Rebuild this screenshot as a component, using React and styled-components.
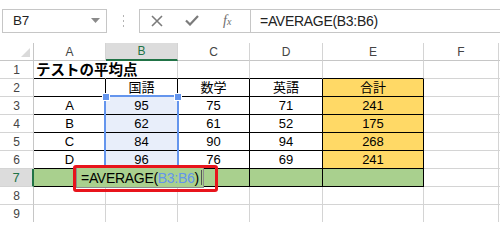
import React from "react";
import styled, { createGlobalStyle, css } from "styled-components";

const FONT = `"Liberation Sans", "Noto Sans CJK JP", sans-serif`;

const colors = {
  grid: "#d4d4d4",
  header: "#c6c6c6",
  headerSel: "#dcdcdc",
  green: "#217346",
  yellow: "#ffd966",
  total: "#a9d08e",
  select: "#e8eefa",
  range: "#6495ed",
  callout: "#e8141c",
};

// column widths include the 1px right grid line
const columns = [
  { label: "", width: 34 },
  { label: "A", width: 72 },
  { label: "B", width: 72, selected: true },
  { label: "C", width: 72 },
  { label: "D", width: 73 },
  { label: "E", width: 101 },
  { label: "F", width: 75 },
  { label: "", width: 30 },
];

const table = [
  [{ text: "テストの平均点", bold: true, align: "left", spill: true }],
  [{}, { text: "国語" }, { text: "数学" }, { text: "英語" }, { text: "合計" }],
  [{ text: "A" }, { text: "95" }, { text: "75" }, { text: "71" }, { text: "241" }],
  [{ text: "B" }, { text: "62" }, { text: "61" }, { text: "52" }, { text: "175" }],
  [{ text: "C" }, { text: "84" }, { text: "90" }, { text: "94" }, { text: "268" }],
  [{ text: "D" }, { text: "96" }, { text: "76" }, { text: "69" }, { text: "241" }],
  [],
  [],
  [],
];

const cellStyle = (row, col) => {
  // col: 0 = A ... 6 = G, row: 1..9
  const inTable = col <= 4;
  let bg = "#fff";
  if (col === 4 && row >= 2 && row <= 6) bg = colors.yellow;
  if (row === 7 && inTable) bg = colors.total;
  if (col === 1 && row >= 3 && row <= 6) bg = colors.select;
  let right = colors.grid;
  let bottom = colors.grid;
  if (inTable && row >= 1 && row <= 7) bottom = "#000";
  if (inTable && row >= 2 && row <= 7) right = "#000";
  if (row === 1 && col === 0) right = "#fff";
  return { bg, right, bottom };
};

export default function App() {
  return (
    <>
      <GlobalStyle />
      <Frame>
        <Toolbar>
          <NameBox>
            <NameText>B7</NameText>
            <svg width="9" height="5" viewBox="0 0 9 5">
              <path d="M0 0h9L4.5 5z" fill="#8a8a8a" />
            </svg>
          </NameBox>
          <Grip>
            <svg width="3" height="13" viewBox="0 0 3 13">
              <rect x="1" y="0" width="1" height="2" fill="#b4b4b4" />
              <rect x="1" y="5" width="1" height="2" fill="#b4b4b4" />
              <rect x="1" y="10" width="1" height="2" fill="#b4b4b4" />
            </svg>
          </Grip>
          <FxGroup>
            <ToolIcon>
              <svg width="12" height="12" viewBox="0 0 12 12">
                <path d="M1 1l10 10M11 1L1 11" stroke="#7b7b7b" strokeWidth="1.6" />
              </svg>
            </ToolIcon>
            <ToolIcon $gap={22}>
              <svg width="14" height="11" viewBox="0 0 14 11">
                <path d="M1 5.5l4 4L13 1" stroke="#7b7b7b" strokeWidth="2.2" fill="none" />
              </svg>
            </ToolIcon>
            <FxLabel>
              f<sub>x</sub>
            </FxLabel>
          </FxGroup>
          <FormulaInput>=AVERAGE(B3:B6)</FormulaInput>
        </Toolbar>

        <Sheet>
          <Corner>
            <svg width="9" height="9" viewBox="0 0 9 9">
              <path d="M9 0v9H0z" fill="#dadada" />
            </svg>
          </Corner>
          {columns.slice(1).map((c, i) => (
            <ColHeader key={i} $selected={c.selected}>
              {c.label}
            </ColHeader>
          ))}
          {table.map((cells, r) => {
            const row = r + 1;
            return (
              <React.Fragment key={row}>
                <RowHeader $selected={row === 7}>{row}</RowHeader>
                {columns.slice(1).map((_, col) => {
                  const data = cells[col] || {};
                  const s = cellStyle(row, col);
                  return (
                    <Cell
                      key={col}
                      $bg={s.bg}
                      $right={s.right}
                      $bottom={s.bottom}
                      $align={data.align}
                      $bold={data.bold}
                      $spill={data.spill}
                    >
                      {data.text}
                    </Cell>
                  );
                })}
              </React.Fragment>
            );
          })}
        </Sheet>

        <RangeBox>
          <Handle $x={-4} $y={-4} />
          <Handle $x={68} $y={-4} />
        </RangeBox>
        <Editor>
          =AVERAGE(<Ref>B3:B6</Ref>)<Caret />
        </Editor>
        <Callout />
      </Frame>
    </>
  );
}

const GlobalStyle = createGlobalStyle`
  html, body {
    margin: 0;
    background: #fff;
  }
  body {
    font-family: ${FONT};
  }
`;

const Frame = styled.div`
  position: relative;
  width: 500px;
  height: 222px;
  overflow: hidden;
  background: #fff;
`;

const Toolbar = styled.div`
  display: flex;
  align-items: center;
  height: 43px;
  padding: 0 0 2px 2px;
  box-sizing: border-box;
`;

const boxBorder = css`
  height: 24px;
  box-sizing: border-box;
  border: 1px solid ${colors.header};
  background: #fff;
`;

const NameBox = styled.div`
  ${boxBorder}
  width: 105px;
  display: flex;
  align-items: center;
  justify-content: space-between;
  padding: 0 6px 0 10px;
`;

const NameText = styled.span`
  font-size: 13.5px;
  color: #222;
  letter-spacing: -0.3px;
`;

const Grip = styled.div`
  width: 32px;
  display: flex;
  justify-content: center;
  align-items: center;
  padding-top: 1px;
`;

const FxGroup = styled.div`
  ${boxBorder}
  width: 112px;
  display: flex;
  align-items: center;
  padding-left: 11px;
`;

const ToolIcon = styled.span`
  display: flex;
  align-items: center;
  margin-left: ${(p) => p.$gap || 0}px;
`;

const FxLabel = styled.span`
  margin-left: 24px;
  font-family: "Liberation Serif", "DejaVu Serif", serif;
  font-style: italic;
  font-size: 14px;
  color: #6d6d6d;
  sub {
    font-size: 10px;
    vertical-align: 0;
  }
`;

const FormulaInput = styled.div`
  ${boxBorder}
  flex: 1;
  margin-left: -1px;
  border-right: none;
  display: flex;
  align-items: center;
  padding-left: 9px;
  font-size: 14px;
  letter-spacing: -0.3px;
  color: #222;
`;

const Sheet = styled.div`
  display: grid;
  grid-template-columns: ${columns.map((c) => `${c.width}px`).join(" ")};
  grid-template-rows: repeat(10, 18px);
  font-size: 13px;
`;

const headerBase = css`
  box-sizing: border-box;
  display: flex;
  align-items: center;
  justify-content: center;
  font-size: 12px;
  color: #444;
  background: #fff;
`;

const Corner = styled.div`
  ${headerBase}
  align-items: flex-end;
  justify-content: flex-end;
  padding: 0 3px 3px 0;
  border-right: 1px solid ${colors.header};
  border-bottom: 1px solid ${colors.header};
`;

const ColHeader = styled.div`
  ${headerBase}
  border-right: 1px solid ${colors.grid};
  border-bottom: 1px solid ${colors.header};
  ${(p) =>
    p.$selected &&
    css`
      background: ${colors.headerSel};
      color: ${colors.green};
      border-bottom: 2px solid ${colors.green};
    `}
`;

const RowHeader = styled.div`
  ${headerBase}
  border-right: 1px solid ${colors.header};
  border-bottom: 1px solid ${colors.grid};
  ${(p) =>
    p.$selected &&
    css`
      background: ${colors.headerSel};
      color: ${colors.green};
      border-right: 2px solid ${colors.green};
      font-size: 13px;
    `}
`;

const Cell = styled.div`
  box-sizing: border-box;
  display: flex;
  align-items: flex-end;
  justify-content: ${(p) => (p.$align === "left" ? "flex-start" : "center")};
  padding: 0 2px 1px;
  line-height: 14px;
  white-space: nowrap;
  overflow: ${(p) => (p.$spill ? "visible" : "hidden")};
  background: ${(p) => p.$bg};
  border-right: 1px solid ${(p) => p.$right};
  border-bottom: 1px solid ${(p) => p.$bottom};
  color: #000;
  ${(p) =>
    p.$bold &&
    css`
      font-weight: bold;
      font-size: 14.5px;
      position: relative;
      z-index: 1;
    `}
`;

const RangeBox = styled.div`
  position: absolute;
  left: 104px;
  top: 95px;
  width: 75px;
  height: 76px;
  box-sizing: border-box;
  border: 2px solid ${colors.range};
`;

const Handle = styled.div`
  position: absolute;
  left: ${(p) => p.$x}px;
  top: ${(p) => p.$y}px;
  width: 6px;
  height: 6px;
  background: ${colors.range};
  border: 1px solid #fff;
`;

const Editor = styled.div`
  position: absolute;
  left: 76px;
  top: 167px;
  width: 128px;
  height: 21px;
  box-sizing: border-box;
  border: 1px solid #8c8c8c;
  background: ${colors.total};
  display: flex;
  align-items: center;
  padding-left: 4px;
  font-size: 14px;
  letter-spacing: -0.3px;
  color: #000;
  white-space: nowrap;
`;

const Ref = styled.span`
  color: ${colors.range};
`;

const Caret = styled.span`
  width: 1px;
  height: 15px;
  margin-left: 2px;
  background: #555;
`;

const Callout = styled.div`
  position: absolute;
  left: 73px;
  top: 165px;
  width: 145px;
  height: 27px;
  box-sizing: border-box;
  border: 3px solid ${colors.callout};
  border-radius: 3px;
`;
